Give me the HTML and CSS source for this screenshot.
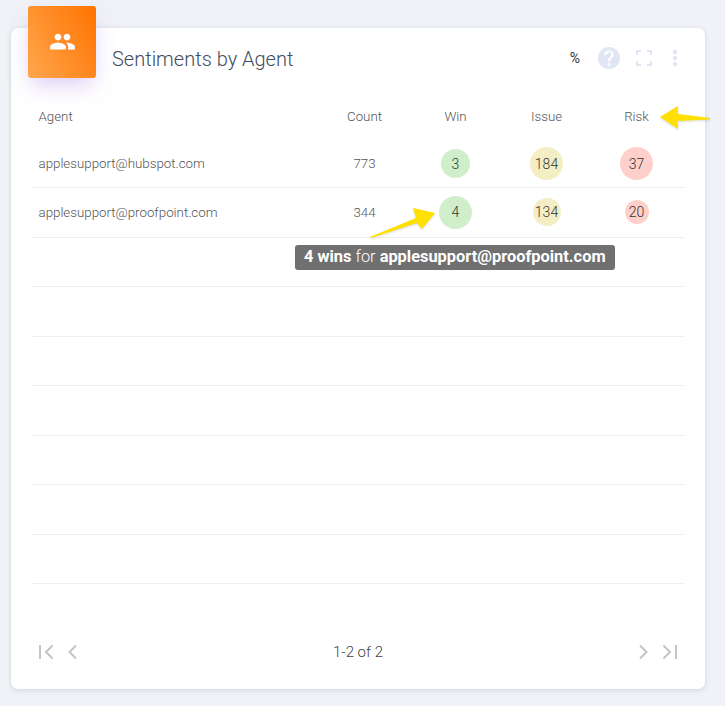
FILE: index.html
```html
<!DOCTYPE html>
<html lang="en">
<head>
    <meta charset="UTF-8">
    <meta name="viewport" content="width=device-width, initial-scale=1.0">
    <title>Sentiments by Agent</title>
    <link rel="stylesheet" href="styles.css">
</head>
<body>
    <section class="card">
        <header class="card-header">
            <div class="card-icon">
                <svg viewBox="0 0 24 24" width="27" height="27"><path fill="#fff" d="M16 11c1.66 0 2.99-1.34 2.99-3S17.66 5 16 5s-3 1.34-3 3 1.34 3 3 3zm-8 0c1.66 0 2.99-1.34 2.99-3S9.66 5 8 5 5 6.34 5 8s1.34 3 3 3zm0 2c-2.33 0-7 1.17-7 3.5V19h14v-2.5C15 14.17 10.33 13 8 13zm8 0c-.29 0-.62.02-.97.05 1.16.84 1.97 1.97 1.97 3.45V19h6v-2.5c0-2.33-4.67-3.5-7-3.5z"/></svg>
            </div>
            <h2 class="card-title">Sentiments by Agent</h2>
            <div class="card-tools">
                <span class="percent">%</span>
                <svg class="help" viewBox="0 0 24 24" width="24" height="24"><path fill="#e0e6f4" d="M12 1C5.900 1 1 5.900 1 12s4.900 11 11 11 11-4.900 11-11S18.100 1 12 1zm1.100 18.500h-2.300v-2.300h2.300v2.300zm2.400-8.200l-1 1.050c-.85.85-1.400 1.550-1.400 3.150h-2.300v-.6c0-1.250.55-2.400 1.400-3.250l1.400-1.450c.45-.4.7-1 .7-1.650 0-1.250-1.050-2.300-2.300-2.300S9.700 7.750 9.700 9H7.400c0-2.550 2.050-4.600 4.600-4.600s4.600 2.050 4.600 4.600c0 1-.45 1.900-1.100 2.300z"/></svg>
                <svg class="expand" viewBox="0 0 16 16" width="16" height="16"><path fill="none" stroke="#e0e6f4" stroke-width="2" d="M1 5V1h4M11 1h4v4M15 11v4h-4M5 15H1v-4"/></svg>
                <svg class="dots" viewBox="0 0 6 18" width="6" height="18"><circle cx="3" cy="3" r="2.200" fill="#e0e6f4"/><circle cx="3" cy="9" r="2.200" fill="#e0e6f4"/><circle cx="3" cy="15" r="2.200" fill="#e0e6f4"/></svg>
            </div>
        </header>

        <table class="agents">
            <thead>
                <tr>
                    <th class="col-agent">Agent</th>
                    <th>Count</th>
                    <th>Win</th>
                    <th>Issue</th>
                    <th class="col-risk">Risk</th>
                </tr>
            </thead>
            <tbody>
                <tr class="first-row">
                    <td class="col-agent">applesupport@hubspot.com</td>
                    <td>773</td>
                    <td><span class="bubble win size-29">3</span></td>
                    <td><span class="bubble issue size-33">184</span></td>
                    <td class="col-risk"><span class="bubble risk size-33">37</span></td>
                </tr>
                <tr>
                    <td class="col-agent">applesupport@proofpoint.com</td>
                    <td>344</td>
                    <td><span class="bubble win size-33">4</span></td>
                    <td><span class="bubble issue size-28">134</span></td>
                    <td class="col-risk"><span class="bubble risk size-24">20</span></td>
                </tr>
                <tr><td colspan="5"></td></tr>
                <tr><td colspan="5"></td></tr>
                <tr><td colspan="5"></td></tr>
                <tr><td colspan="5"></td></tr>
                <tr><td colspan="5"></td></tr>
                <tr><td colspan="5"></td></tr>
                <tr><td colspan="5"></td></tr>
            </tbody>
        </table>

        <footer class="pager">
            <div class="pager-group">
                <svg viewBox="0 0 16 16" width="16" height="16"><path fill="none" stroke="#c4c4c4" stroke-width="2" d="M2 1v14M14.500 1.500L8 8l6.500 6.500"/></svg>
                <svg viewBox="0 0 12 16" width="12" height="16"><path fill="none" stroke="#c4c4c4" stroke-width="2" d="M10 1.500L3.500 8l6.500 6.500"/></svg>
            </div>
            <span class="pager-label">1-2 of 2</span>
            <div class="pager-group">
                <svg viewBox="0 0 12 16" width="12" height="16"><path fill="none" stroke="#c4c4c4" stroke-width="2" d="M2 1.500L8.500 8 2 14.500"/></svg>
                <svg viewBox="0 0 16 16" width="16" height="16"><path fill="none" stroke="#c4c4c4" stroke-width="2" d="M14 1v14M1.500 1.500L8 8l-6.500 6.500"/></svg>
            </div>
        </footer>

        <div class="tooltip"><b>4 wins</b> for <b>applesupport@proofpoint.com</b></div>

        <svg class="arrow arrow-risk" viewBox="0 0 50 24" width="50" height="24"><path fill="#ffe000" d="M0 11L18 0v8l32 4v1.500L18 15v8z"/></svg>
        <svg class="arrow arrow-win" viewBox="0 0 72 34" width="72" height="34"><path fill="#ffe000" d="M66 6L44 1l3 10L1 30l1 1 46-15 5 6z"/></svg>
    </section>
</body>
</html>
```

FILE: styles.css
```css
* {
    box-sizing: border-box;
}
body {
    font-family: Roboto, Arial, sans-serif;
    background-color: #f0f2f7;
    margin: 0;
    padding: 28px 20px 17px 11px;
    color: #555;
}
.card {
    position: relative;
    height: 661px;
    display: flex;
    flex-direction: column;
    background: #ffffff;
    border-radius: 7px;
    box-shadow: 0px 1px 5px rgba(60, 70, 100, 0.18);
}
.card-header {
    display: flex;
    align-items: center;
    height: 60px;
    padding: 0 21px 0 17px;
}
.card-icon {
    width: 68px;
    height: 72px;
    margin-top: -32px;
    flex-shrink: 0;
    display: flex;
    align-items: center;
    justify-content: center;
    border-radius: 3px;
    background: linear-gradient(60deg, #ffa64d, #ff7300);
    box-shadow: 0px 10px 22px -4px rgba(150, 100, 220, 0.35);
}
.card-icon svg {
    margin-top: -2px;
}
.card-title {
    margin: 2px 0 0 16px;
    font-size: 20px;
    font-weight: 300;
    color: #3f4d60;
}
.card-tools {
    margin-left: auto;
    display: flex;
    align-items: center;
}
.percent {
    font-size: 14px;
    color: #333;
    margin-right: 17px;
}
.expand {
    margin-left: 15px;
}
.dots {
    margin-left: 20px;
    margin-right: 6px;
}
.agents {
    width: 652px;
    margin: 0 0 0 21px;
    border-collapse: collapse;
    table-layout: fixed;
    font-size: 13.3px;
    font-weight: 300;
}
.agents th {
    height: 50px;
    width: 91px;
    padding: 6px 2px 0 0;
    font-weight: 300;
    color: #555;
    text-align: center;
}
.agents th.col-agent {
    width: 288px;
}
.agents td {
    height: 49.5px;
    padding: 0 2px 0 0;
    text-align: center;
    border-bottom: 1px solid #eee;
}
.agents .first-row td {
    padding-top: 2px;
}
.agents .col-agent {
    padding-left: 6.5px;
    text-align: left;
}
.agents .col-risk {
    padding-right: 4px;
}
.bubble {
    display: inline-flex;
    align-items: center;
    justify-content: center;
    border-radius: 50%;
    vertical-align: middle;
    font-size: 14px;
    font-weight: 300;
    color: #333;
}
.win {
    background-color: #d0eeca;
}
.issue {
    background-color: #f4eec4;
}
.risk {
    background-color: #ffcfc9;
}
.size-24 {
    width: 24px;
    height: 24px;
}
.size-28 {
    width: 28px;
    height: 28px;
}
.size-29 {
    width: 29px;
    height: 29px;
}
.size-33 {
    width: 33px;
    height: 33px;
}
.pager {
    margin-top: auto;
    height: 74px;
    padding: 0 27px;
    display: flex;
    align-items: center;
    justify-content: space-between;
}
.pager-group {
    display: flex;
    align-items: center;
    gap: 12px;
}
.pager-label {
    font-size: 15px;
    font-weight: 300;
    color: #444;
}
.tooltip {
    position: absolute;
    left: 284px;
    top: 217px;
    height: 25px;
    padding: 0 9px 2px;
    display: flex;
    align-items: center;
    gap: 4px;
    border-radius: 3px;
    background-color: #707070;
    color: #fff;
    font-size: 16.4px;
    font-weight: 300;
    white-space: nowrap;
}
.tooltip b {
    font-weight: 700;
}
.arrow {
    position: absolute;
    filter: drop-shadow(0 1px 1px rgba(0, 0, 0, 0.15));
}
.arrow-risk {
    left: 649px;
    top: 78px;
}
.arrow-win {
    left: 358px;
    top: 179px;
}
```
